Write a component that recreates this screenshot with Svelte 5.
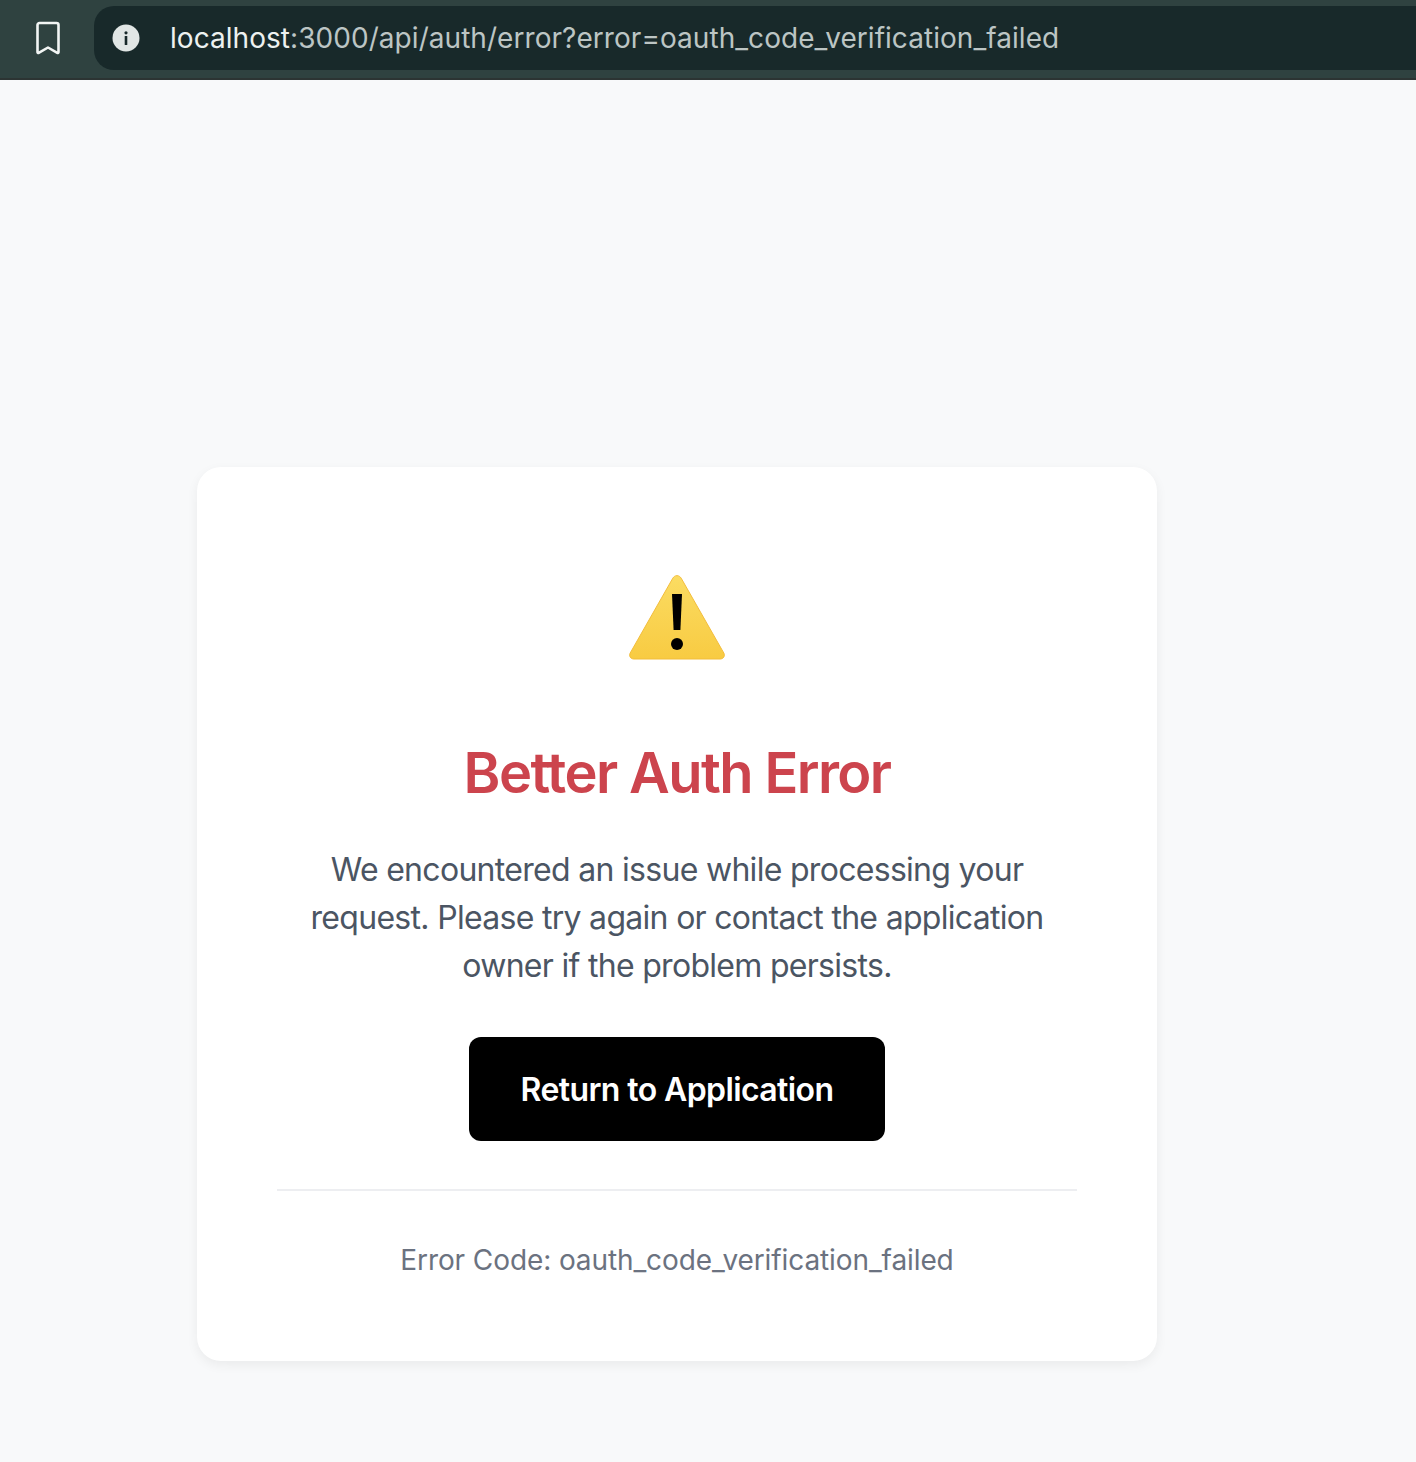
<script>
  const errorCode = 'oauth_code_verification_failed';
</script>

<div class="toolbar">
  <svg class="bookmark" viewBox="0 0 26 34" fill="none" stroke="currentColor" stroke-width="2.6" stroke-linejoin="round" aria-hidden="true">
    <path d="M4.5 2h17a2 2 0 0 1 2 2v27.2a.8.8 0 0 1-1.2.7L13 26.5 3.7 31.9a.8.8 0 0 1-1.2-.7V4a2 2 0 0 1 2-2z" />
  </svg>
  <div class="address">
    <svg class="info" viewBox="0 0 28 28" aria-hidden="true">
      <circle cx="14" cy="14" r="13.5" fill="#e1e6e5" />
      <circle cx="14" cy="8.8" r="1.6" fill="#18292a" />
      <rect x="12.7" y="12" width="2.6" height="9" rx="0.5" fill="#18292a" />
    </svg>
    <span class="url"><span class="host">localhost</span>:3000/api/auth/error?error={errorCode}</span>
  </div>
</div>

<main class="page">
  <div class="card">
    <svg class="warning" viewBox="0 0 96 86" aria-hidden="true">
      <defs>
        <linearGradient id="warn-fill" x1="0" y1="0" x2="0" y2="1">
          <stop offset="0" stop-color="#fbdc62" />
          <stop offset="1" stop-color="#f8cb42" />
        </linearGradient>
      </defs>
      <path d="M43.8 3.2c2-3.4 6.4-3.4 8.4 0l42.6 74.8c1.5 3-.3 6-3.8 6H5c-3.5 0-5.3-3-3.8-6z" fill="url(#warn-fill)" stroke="#f3bd3b" stroke-width="1" />
      <path d="M43 19h10l-1.6 36h-6.8z" fill="#000" />
      <circle cx="48" cy="69" r="6" fill="#000" />
    </svg>
    <h1>Better Auth Error</h1>
    <p class="message">We encountered an issue while processing your request. Please try again or contact the application owner if the problem persists.</p>
    <a class="return" href="/">Return to Application</a>
    <div class="code">Error Code: {errorCode}</div>
  </div>
</main>

<style>
  :global(body) {
    margin: 0;
    background: #f8f9fa;
    font-family: Inter, "Liberation Sans", sans-serif;
  }

  .toolbar {
    height: 80px;
    box-sizing: border-box;
    padding: 6px 0 8px 35px;
    display: flex;
    gap: 33px;
    background: #2f4240;
    border-bottom: 2px solid #2c3433;
  }
  .bookmark {
    width: 26px;
    height: 34px;
    margin-top: 15px;
    color: #f2f5f4;
    flex: none;
  }
  .address {
    flex: 1;
    display: flex;
    align-items: center;
    gap: 30px;
    padding-left: 18px;
    background: #18292a;
    border-radius: 20px 0 0 20px;
  }
  .info {
    width: 28px;
    height: 28px;
    flex: none;
  }
  .url {
    font-size: 28px;
    letter-spacing: 0.05px;
    color: #bcc5c4;
    white-space: nowrap;
  }
  .host {
    color: #edf1f0;
  }

  .page {
    padding: 387px 0 101px 197px;
  }
  .card {
    width: 960px;
    height: 894px;
    box-sizing: border-box;
    padding: 96px 80px 0;
    background: #fff;
    border-radius: 24px;
    box-shadow: 0 4px 12px rgba(0, 0, 0, 0.06);
    display: flex;
    flex-direction: column;
    align-items: center;
    text-align: center;
  }
  .warning {
    width: 96px;
    height: 86px;
    margin-top: 12px;
    flex: none;
  }
  h1 {
    margin: 76px 0 0;
    font-size: 56px;
    line-height: 72px;
    font-weight: 600;
    letter-spacing: -1.6px;
    color: #cc444d;
  }
  .message {
    margin: 37px 0 0;
    width: 760px;
    font-size: 32px;
    line-height: 48px;
    letter-spacing: -0.7px;
    color: #4b5563;
  }
  .return {
    margin-top: 47px;
    width: 416px;
    height: 104px;
    display: flex;
    align-items: center;
    justify-content: center;
    background: #000;
    color: #fff;
    border-radius: 12px;
    font-size: 32px;
    font-weight: 600;
    letter-spacing: -0.6px;
    text-decoration: none;
  }
  .code {
    margin-top: 48px;
    width: 800px;
    padding-top: 47px;
    border-top: 2px solid #edeef1;
    font-size: 28px;
    line-height: 44px;
    letter-spacing: -0.1px;
    color: #6b7280;
  }
</style>
